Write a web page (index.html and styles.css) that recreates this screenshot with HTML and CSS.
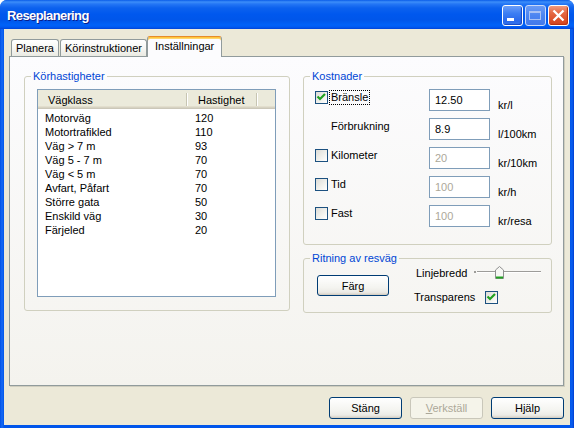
FILE: index.html
```html
<!DOCTYPE html>
<html lang="sv">
<head>
<meta charset="utf-8">
<title>Reseplanering</title>
<link rel="stylesheet" href="styles.css">
</head>
<body>
<div class="window">
  <div class="titlebar">
    <span class="title">Reseplanering</span>
    <div class="tb-buttons">
      <span class="tb-btn tb-min"><svg width="19" height="19" viewBox="0 0 19 19"><rect x="4" y="12" width="7" height="3" fill="#fff"/></svg></span>
      <span class="tb-btn tb-max"><svg width="19" height="19" viewBox="0 0 19 19"><rect x="3.5" y="5.5" width="11" height="8" fill="none" stroke="#A9C2F4" stroke-width="1"/><rect x="3" y="5" width="12" height="2" fill="#A9C2F4"/></svg></span>
      <span class="tb-btn tb-close"><svg width="19" height="19" viewBox="0 0 19 19"><path d="M4.5 4.5 L14.5 14.5 M14.5 4.5 L4.5 14.5" stroke="#fff" stroke-width="2.3" fill="none"/></svg></span>
    </div>
  </div>
  <div class="client">
    <div class="tabs">
      <div class="tab">Planera</div>
      <div class="tab">Körinstruktioner</div>
      <div class="tab active">Inställningar</div>
    </div>
    <div class="panel">
      <fieldset class="group group-speeds">
        <legend>Körhastigheter</legend>
        <div class="listbox">
          <div class="lv-header">
            <div class="lv-hcol">Vägklass</div>
            <div class="lv-hcol">Hastighet</div>
            <div class="lv-hfill"></div>
          </div>
          <div class="lv-rows">
            <div class="lv-row"><span>Motorväg</span><span>120</span></div>
            <div class="lv-row"><span>Motortrafikled</span><span>110</span></div>
            <div class="lv-row"><span>Väg &gt; 7 m</span><span>93</span></div>
            <div class="lv-row"><span>Väg 5 - 7 m</span><span>70</span></div>
            <div class="lv-row"><span>Väg &lt; 5 m</span><span>70</span></div>
            <div class="lv-row"><span>Avfart, Påfart</span><span>70</span></div>
            <div class="lv-row"><span>Större gata</span><span>50</span></div>
            <div class="lv-row"><span>Enskild väg</span><span>30</span></div>
            <div class="lv-row"><span>Färjeled</span><span>20</span></div>
          </div>
        </div>
      </fieldset>
      <div class="right-col">
        <fieldset class="group group-costs">
          <legend>Kostnader</legend>
          <div class="cost-grid">
            <div class="chk-label">
              <span class="checkbox"><svg width="11" height="11" viewBox="0 0 11 11"><polyline points="1.5,4.5 4,7 9,2" fill="none" stroke="#21A121" stroke-width="2.2"/></svg></span>
              <span class="focus">Bränsle</span>
            </div>
            <div class="field">12.50</div>
            <div class="unit">kr/l</div>

            <div class="plain-label">Förbrukning</div>
            <div class="field">8.9</div>
            <div class="unit">l/100km</div>

            <div class="chk-label">
              <span class="checkbox"></span>
              <span>Kilometer</span>
            </div>
            <div class="field disabled">20</div>
            <div class="unit">kr/10km</div>

            <div class="chk-label">
              <span class="checkbox"></span>
              <span>Tid</span>
            </div>
            <div class="field disabled">100</div>
            <div class="unit">kr/h</div>

            <div class="chk-label">
              <span class="checkbox"></span>
              <span>Fast</span>
            </div>
            <div class="field disabled">100</div>
            <div class="unit">kr/resa</div>
          </div>
        </fieldset>
        <fieldset class="group group-draw">
          <legend>Ritning av resväg</legend>
          <div class="draw-body">
            <button class="btn btn-color" type="button">Färg</button>
            <div class="draw-opts">
              <div class="opt-row">
                <span class="opt-label opt-width">Linjebredd</span>
                <div class="slider">
                  <svg class="thumb" width="9" height="13" viewBox="0 0 9 13"><path d="M0.5 4 L4.5 0.5 L8.5 4 L8.5 12.5 L0.5 12.5 Z" fill="#F7F7F4" stroke="#8E8F8F"/><path d="M1 11.5 L8 11.5" stroke="#21A121" stroke-width="2"/></svg>
                </div>
              </div>
              <div class="opt-row">
                <span class="opt-label opt-transp">Transparens</span>
                <span class="checkbox"><svg width="11" height="11" viewBox="0 0 11 11"><polyline points="1.5,4.5 4,7 9,2" fill="none" stroke="#21A121" stroke-width="2.2"/></svg></span>
              </div>
            </div>
          </div>
        </fieldset>
      </div>
    </div>
    <div class="button-row">
      <button class="btn" type="button">Stäng</button>
      <button class="btn disabled" type="button"><u>V</u>erkställ</button>
      <button class="btn" type="button">Hjälp</button>
    </div>
  </div>
</div>
</body>
</html>
```

FILE: styles.css
```css
* { box-sizing: border-box; }

html, body {
  margin: 0;
  padding: 0;
  background: #ffffff;
}

body {
  font-family: "Liberation Sans", Arial, sans-serif;
  font-size: 11px;
  color: #000;
}

.window {
  width: 574px;
  height: 428px;
  display: flex;
  flex-direction: column;
  background: linear-gradient(to right, #0050E6 0, #166AF5 2px, #0055EA 4px, #0055EA 570px, #0A5FF0 572px, #003DD0 574px);
  border-radius: 7px 7px 0 0;
  overflow: hidden;
}

.titlebar {
  height: 29px;
  flex: none;
  display: flex;
  align-items: center;
  justify-content: space-between;
  padding: 2px 5px 0 7px;
  background: linear-gradient(to bottom, #0A5CE8 0, #3D8EF9 2px, #2476F5 4px, #0C61EE 8px, #0058EE 14px, #0056EA 20px, #0062F8 25px, #005AF2 27px, #0044D8 29px);
}

.title {
  color: #fff;
  font-weight: bold;
  font-size: 13px;
  letter-spacing: -0.6px;
  text-shadow: 1px 1px 0 #0A1E8C;
}

.tb-buttons {
  display: flex;
  gap: 2px;
}

.tb-btn {
  width: 21px;
  height: 21px;
  border: 1px solid #fff;
  border-radius: 3px;
  display: flex;
  align-items: center;
  justify-content: center;
}

.tb-min {
  background: linear-gradient(to bottom, #6A9DF8 0, #3B7DF3 40%, #2A68EB 80%, #3B7CF0 100%);
  box-shadow: inset -1px -1px 1px #1847C4;
}

.tb-max {
  border-color: #C9D9F9;
  background: linear-gradient(to bottom, #6B9BF5 0, #4C85F1 50%, #4379EB 100%);
}

.tb-close {
  background: linear-gradient(to bottom, #F19A7E 0, #E56A45 35%, #DB4F28 75%, #D2461F 100%);
  box-shadow: inset -1px -1px 1px #B83210;
}

.client {
  flex: 1;
  margin: 0 4px 3px 4px;
  background: #ECE9D8;
  display: flex;
  flex-direction: column;
  padding: 7px 6px 6px 5px;
}

.tabs {
  display: flex;
  align-items: flex-end;
  height: 20px;
  padding-left: 2px;
  gap: 1px;
  position: relative;
  z-index: 1;
}

.tab {
  height: 17px;
  padding: 0 4px;
  line-height: 16px;
  border: 1px solid #919B9C;
  border-bottom: none;
  border-radius: 3px 3px 0 0;
  background: linear-gradient(to bottom, #FFFFFF 0, #F7F7F4 50%, #EAEAE2 100%);
  white-space: nowrap;
}

.tab.active {
  height: 21px;
  margin-bottom: -1px;
  margin-left: -1px;
  padding: 2px 7px 0 7px;
  line-height: 15px;
  border-top: 1px solid #E68B2C;
  background: #FCFCFE;
  box-shadow: inset 0 1px 0 #FFC73C, inset 0 2px 0 #FFD56E;
}

.panel {
  height: 330px;
  flex: none;
  border: 1px solid #919B9C;
  background: linear-gradient(to bottom, #FCFCFE 0, #F4F3EE 100%);
  box-shadow: 1px 1px 0 #D0CEBF;
  display: flex;
  align-items: flex-start;
  gap: 13px;
  padding: 12px 0 0 14px;
}

.group {
  margin: 0;
  padding: 0;
  min-width: 0;
  border: 1px solid #D0D0BF;
  border-radius: 3px;
}

.group legend {
  margin-left: 6px;
  padding: 0 2px;
  color: #0046D5;
  line-height: 14px;
}

.group-speeds {
  width: 266px;
  height: 242px;
}

.listbox {
  margin: 6px 0 0 12px;
  width: 239px;
  height: 208px;
  border: 1px solid #7F9DB9;
  background: #fff;
}

.lv-header {
  height: 19px;
  display: grid;
  grid-template-columns: 150px 70px 1fr;
  background: #EBEADB;
  box-shadow: inset 0 -1px 0 #CBC7B8, inset 0 -2px 0 #D6D2C2, inset 0 -3px 0 #E2DECD;
}

.lv-hcol {
  padding: 2px 0 0 10px;
  line-height: 16px;
  background:
    linear-gradient(#C7C5B2, #C7C5B2) no-repeat right 1px top 3px / 1px 13px,
    linear-gradient(#FFFFFF, #FFFFFF) no-repeat right 0 top 3px / 1px 13px;
}

.lv-rows {
  padding-top: 2px;
}

.lv-row {
  display: grid;
  grid-template-columns: 150px 70px;
  height: 14px;
  line-height: 14px;
}

.lv-row span {
  padding-left: 7px;
  white-space: nowrap;
}

.right-col {
  width: 249px;
  display: flex;
  flex-direction: column;
  gap: 6px;
}

.group-costs {
  height: 176px;
}

.cost-grid {
  margin: 6px 0 0 11px;
  display: grid;
  grid-template-columns: 114px 61px auto;
  grid-auto-rows: 22px;
  row-gap: 7px;
}

.chk-label {
  display: flex;
  align-items: center;
  gap: 3px;
  height: 14px;
  margin-top: 1px;
  line-height: 14px;
}

.checkbox {
  width: 13px;
  height: 13px;
  flex: none;
  border: 1px solid #1C5180;
  background: linear-gradient(135deg, #DCDCD7 0, #F2F2EE 60%, #FFFFFF 100%);
  display: inline-flex;
}

.focus {
  border: 1px dotted #000;
  padding: 0 1px;
  margin-left: -2px;
  line-height: 13px;
}

.plain-label {
  padding-left: 16px;
  margin-top: 1px;
  line-height: 14px;
}

.field {
  border: 1px solid #7F9DB9;
  background: #fff;
  padding-left: 5px;
  line-height: 20px;
}

.field.disabled {
  color: #ACA899;
}

.unit {
  padding-left: 8px;
  align-self: end;
  line-height: 14px;
  margin-bottom: -1px;
  white-space: nowrap;
}

.group-draw {
  height: 62px;
}

.draw-body {
  margin-left: 13px;
  display: flex;
  align-items: flex-start;
}

.btn {
  font-family: "Liberation Sans", Arial, sans-serif;
  font-size: 11px;
  color: #000;
  width: 73px;
  height: 22px;
  padding: 0;
  border: 1px solid #003C74;
  border-radius: 3px;
  background: linear-gradient(to bottom, #FFFFFF 0, #F4F4F0 60%, #ECEBE6 85%, #D6D0C5 100%);
  box-shadow: inset 0 -1px 0 #D6D0C5;
}

.btn u {
  text-decoration: underline;
}

.btn.disabled {
  color: #ACA899;
  border-color: #C9C7BA;
  background: #F5F4EA;
  box-shadow: none;
}

.btn-color {
  width: 72px;
  height: 21px;
  margin-top: 10px;
}

.draw-opts {
  margin-left: 25px;
  display: flex;
  flex-direction: column;
  gap: 8px;
}

.opt-row {
  display: flex;
  align-items: center;
  height: 16px;
}

.opt-label {
  line-height: 14px;
  white-space: nowrap;
}

.opt-width {
  width: 60px;
  padding-left: 2px;
}

.opt-transp {
  width: 71px;
}

.slider {
  width: 67px;
  height: 16px;
  display: flex;
  align-items: flex-start;
  background:
    linear-gradient(#9D9C99, #9D9C99) no-repeat 0 6px / 2px 2px,
    linear-gradient(#9D9C99, #9D9C99) no-repeat 3px 6px / 64px 1px,
    linear-gradient(#FFFFFF, #FFFFFF) no-repeat 3px 7px / 64px 1px;
}

.thumb {
  margin-left: 21px;
  margin-top: 1px;
}

.button-row {
  margin-top: 11px;
  display: flex;
  justify-content: flex-end;
  gap: 8px;
}
```
